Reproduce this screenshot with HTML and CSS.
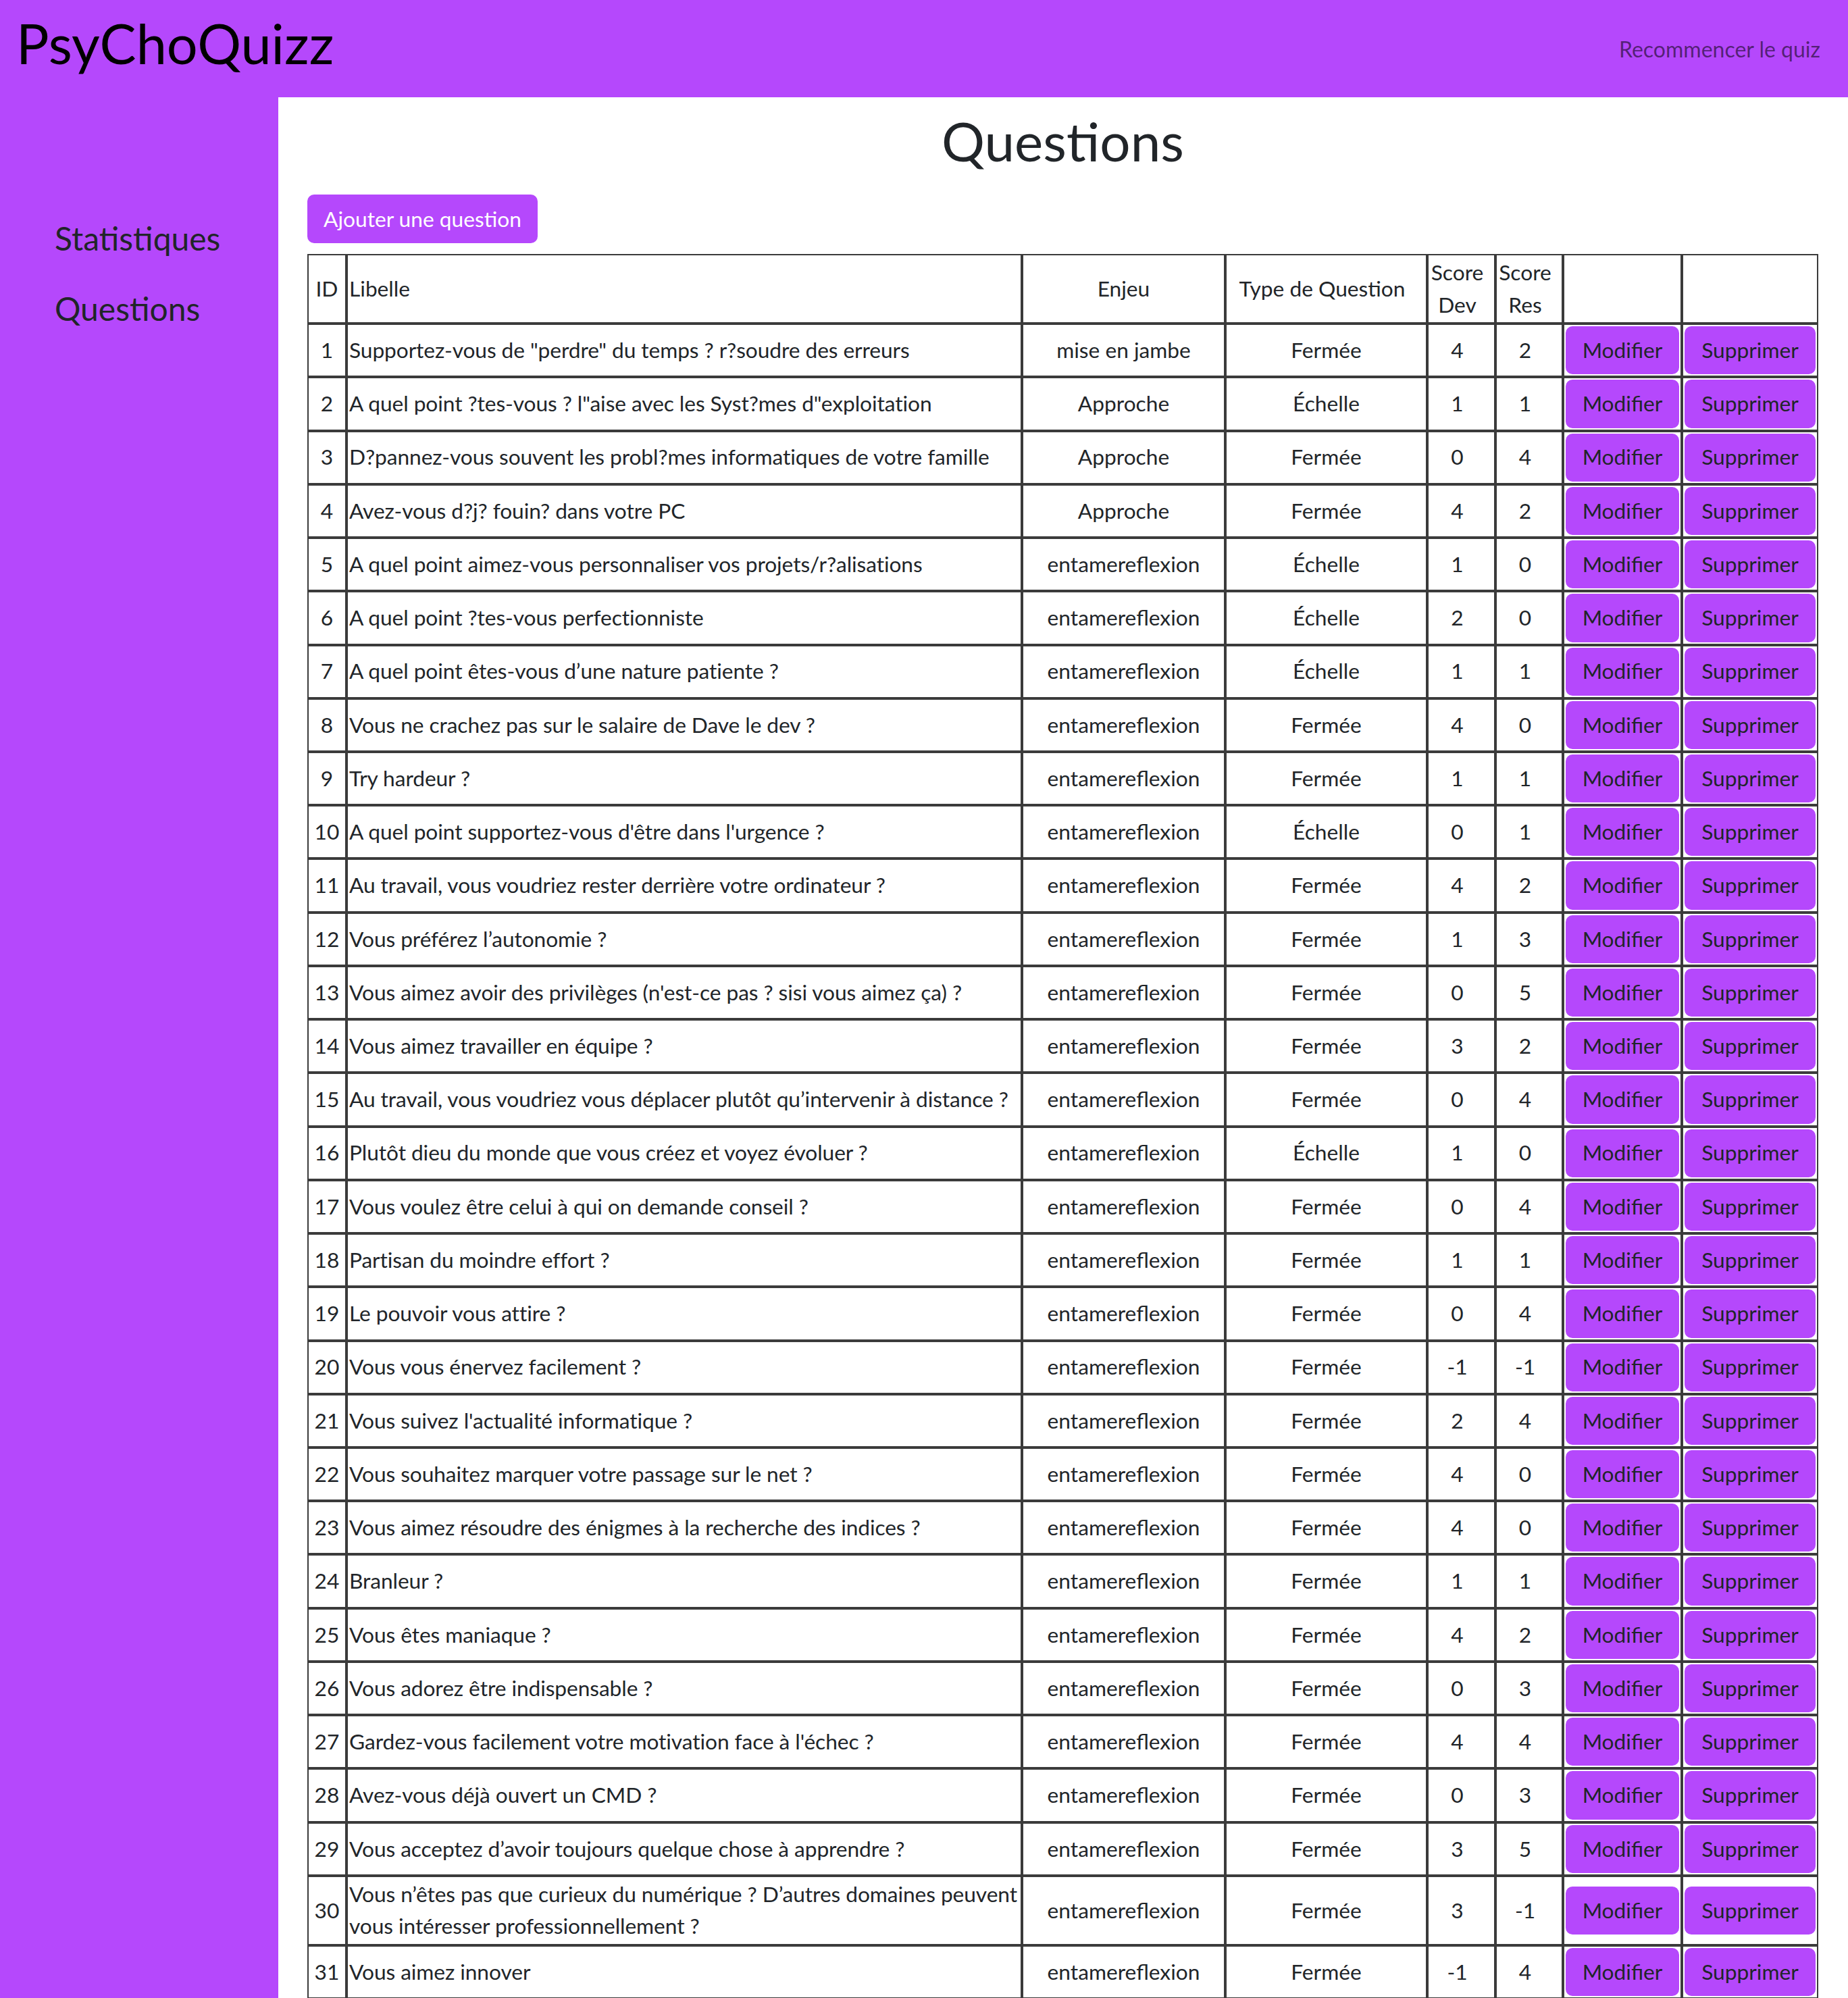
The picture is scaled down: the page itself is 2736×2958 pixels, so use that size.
FILE: index.html
```html
<!DOCTYPE html>
<html lang="fr">
<head>
<meta charset="utf-8">
<title>PsyChoQuizz</title>
<link rel="stylesheet" href="styles.css">
</head>
<body>
<header class="topbar">
  <div class="brand">PsyChoQuizz</div>
  <a class="restart" href="#">Recommencer le quiz</a>
</header>
<div class="layout">
  <nav class="sidebar">
    <a class="side-link" href="#">Statistiques</a>
    <a class="side-link" href="#">Questions</a>
  </nav>
  <main class="main">
    <h1 class="page-title">Questions</h1>
    <div class="toolbar"><button class="btn-add" type="button">Ajouter une question</button></div>
    <table class="qtable">
      <thead>
        <tr>
          <th class="c-id">ID</th>
          <th class="c-lib">Libelle</th>
          <th class="c-enj">Enjeu</th>
          <th class="c-type">Type de Question</th>
          <th class="c-dev score">Score Dev</th>
          <th class="c-res score">Score Res</th>
          <th class="c-mod"></th>
          <th class="c-sup"></th>
        </tr>
      </thead>
      <tbody>
        <tr><td>1</td><td class="lib">Supportez-vous de "perdre" du temps ? r?soudre des erreurs</td><td>mise en jambe</td><td>Fermée</td><td class="score">4</td><td class="score">2</td><td><button class="btn-row" type="button">Modifier</button></td><td><button class="btn-row" type="button">Supprimer</button></td></tr>
        <tr><td>2</td><td class="lib">A quel point ?tes-vous ? l"aise avec les Syst?mes d"exploitation</td><td>Approche</td><td>Échelle</td><td class="score">1</td><td class="score">1</td><td><button class="btn-row" type="button">Modifier</button></td><td><button class="btn-row" type="button">Supprimer</button></td></tr>
        <tr><td>3</td><td class="lib">D?pannez-vous souvent les probl?mes informatiques de votre famille</td><td>Approche</td><td>Fermée</td><td class="score">0</td><td class="score">4</td><td><button class="btn-row" type="button">Modifier</button></td><td><button class="btn-row" type="button">Supprimer</button></td></tr>
        <tr><td>4</td><td class="lib">Avez-vous d?j? fouin? dans votre PC</td><td>Approche</td><td>Fermée</td><td class="score">4</td><td class="score">2</td><td><button class="btn-row" type="button">Modifier</button></td><td><button class="btn-row" type="button">Supprimer</button></td></tr>
        <tr><td>5</td><td class="lib">A quel point aimez-vous personnaliser vos projets/r?alisations</td><td>entamereflexion</td><td>Échelle</td><td class="score">1</td><td class="score">0</td><td><button class="btn-row" type="button">Modifier</button></td><td><button class="btn-row" type="button">Supprimer</button></td></tr>
        <tr><td>6</td><td class="lib">A quel point ?tes-vous perfectionniste</td><td>entamereflexion</td><td>Échelle</td><td class="score">2</td><td class="score">0</td><td><button class="btn-row" type="button">Modifier</button></td><td><button class="btn-row" type="button">Supprimer</button></td></tr>
        <tr><td>7</td><td class="lib">A quel point êtes-vous d’une nature patiente ?</td><td>entamereflexion</td><td>Échelle</td><td class="score">1</td><td class="score">1</td><td><button class="btn-row" type="button">Modifier</button></td><td><button class="btn-row" type="button">Supprimer</button></td></tr>
        <tr><td>8</td><td class="lib">Vous ne crachez pas sur le salaire de Dave le dev ?</td><td>entamereflexion</td><td>Fermée</td><td class="score">4</td><td class="score">0</td><td><button class="btn-row" type="button">Modifier</button></td><td><button class="btn-row" type="button">Supprimer</button></td></tr>
        <tr><td>9</td><td class="lib">Try hardeur ?</td><td>entamereflexion</td><td>Fermée</td><td class="score">1</td><td class="score">1</td><td><button class="btn-row" type="button">Modifier</button></td><td><button class="btn-row" type="button">Supprimer</button></td></tr>
        <tr><td>10</td><td class="lib">A quel point supportez-vous d'être dans l'urgence ?</td><td>entamereflexion</td><td>Échelle</td><td class="score">0</td><td class="score">1</td><td><button class="btn-row" type="button">Modifier</button></td><td><button class="btn-row" type="button">Supprimer</button></td></tr>
        <tr><td>11</td><td class="lib">Au travail, vous voudriez rester derrière votre ordinateur ?</td><td>entamereflexion</td><td>Fermée</td><td class="score">4</td><td class="score">2</td><td><button class="btn-row" type="button">Modifier</button></td><td><button class="btn-row" type="button">Supprimer</button></td></tr>
        <tr><td>12</td><td class="lib">Vous préférez l’autonomie ?</td><td>entamereflexion</td><td>Fermée</td><td class="score">1</td><td class="score">3</td><td><button class="btn-row" type="button">Modifier</button></td><td><button class="btn-row" type="button">Supprimer</button></td></tr>
        <tr><td>13</td><td class="lib">Vous aimez avoir des privilèges (n'est-ce pas ? sisi vous aimez ça) ?</td><td>entamereflexion</td><td>Fermée</td><td class="score">0</td><td class="score">5</td><td><button class="btn-row" type="button">Modifier</button></td><td><button class="btn-row" type="button">Supprimer</button></td></tr>
        <tr><td>14</td><td class="lib">Vous aimez travailler en équipe ?</td><td>entamereflexion</td><td>Fermée</td><td class="score">3</td><td class="score">2</td><td><button class="btn-row" type="button">Modifier</button></td><td><button class="btn-row" type="button">Supprimer</button></td></tr>
        <tr><td>15</td><td class="lib">Au travail, vous voudriez vous déplacer plutôt qu’intervenir à distance ?</td><td>entamereflexion</td><td>Fermée</td><td class="score">0</td><td class="score">4</td><td><button class="btn-row" type="button">Modifier</button></td><td><button class="btn-row" type="button">Supprimer</button></td></tr>
        <tr><td>16</td><td class="lib">Plutôt dieu du monde que vous créez et voyez évoluer ?</td><td>entamereflexion</td><td>Échelle</td><td class="score">1</td><td class="score">0</td><td><button class="btn-row" type="button">Modifier</button></td><td><button class="btn-row" type="button">Supprimer</button></td></tr>
        <tr><td>17</td><td class="lib">Vous voulez être celui à qui on demande conseil ?</td><td>entamereflexion</td><td>Fermée</td><td class="score">0</td><td class="score">4</td><td><button class="btn-row" type="button">Modifier</button></td><td><button class="btn-row" type="button">Supprimer</button></td></tr>
        <tr><td>18</td><td class="lib">Partisan du moindre effort ?</td><td>entamereflexion</td><td>Fermée</td><td class="score">1</td><td class="score">1</td><td><button class="btn-row" type="button">Modifier</button></td><td><button class="btn-row" type="button">Supprimer</button></td></tr>
        <tr><td>19</td><td class="lib">Le pouvoir vous attire ?</td><td>entamereflexion</td><td>Fermée</td><td class="score">0</td><td class="score">4</td><td><button class="btn-row" type="button">Modifier</button></td><td><button class="btn-row" type="button">Supprimer</button></td></tr>
        <tr><td>20</td><td class="lib">Vous vous énervez facilement ?</td><td>entamereflexion</td><td>Fermée</td><td class="score">-1</td><td class="score">-1</td><td><button class="btn-row" type="button">Modifier</button></td><td><button class="btn-row" type="button">Supprimer</button></td></tr>
        <tr><td>21</td><td class="lib">Vous suivez l'actualité informatique ?</td><td>entamereflexion</td><td>Fermée</td><td class="score">2</td><td class="score">4</td><td><button class="btn-row" type="button">Modifier</button></td><td><button class="btn-row" type="button">Supprimer</button></td></tr>
        <tr><td>22</td><td class="lib">Vous souhaitez marquer votre passage sur le net ?</td><td>entamereflexion</td><td>Fermée</td><td class="score">4</td><td class="score">0</td><td><button class="btn-row" type="button">Modifier</button></td><td><button class="btn-row" type="button">Supprimer</button></td></tr>
        <tr><td>23</td><td class="lib">Vous aimez résoudre des énigmes à la recherche des indices ?</td><td>entamereflexion</td><td>Fermée</td><td class="score">4</td><td class="score">0</td><td><button class="btn-row" type="button">Modifier</button></td><td><button class="btn-row" type="button">Supprimer</button></td></tr>
        <tr><td>24</td><td class="lib">Branleur ?</td><td>entamereflexion</td><td>Fermée</td><td class="score">1</td><td class="score">1</td><td><button class="btn-row" type="button">Modifier</button></td><td><button class="btn-row" type="button">Supprimer</button></td></tr>
        <tr><td>25</td><td class="lib">Vous êtes maniaque ?</td><td>entamereflexion</td><td>Fermée</td><td class="score">4</td><td class="score">2</td><td><button class="btn-row" type="button">Modifier</button></td><td><button class="btn-row" type="button">Supprimer</button></td></tr>
        <tr><td>26</td><td class="lib">Vous adorez être indispensable ?</td><td>entamereflexion</td><td>Fermée</td><td class="score">0</td><td class="score">3</td><td><button class="btn-row" type="button">Modifier</button></td><td><button class="btn-row" type="button">Supprimer</button></td></tr>
        <tr><td>27</td><td class="lib">Gardez-vous facilement votre motivation face à l'échec ?</td><td>entamereflexion</td><td>Fermée</td><td class="score">4</td><td class="score">4</td><td><button class="btn-row" type="button">Modifier</button></td><td><button class="btn-row" type="button">Supprimer</button></td></tr>
        <tr><td>28</td><td class="lib">Avez-vous déjà ouvert un CMD ?</td><td>entamereflexion</td><td>Fermée</td><td class="score">0</td><td class="score">3</td><td><button class="btn-row" type="button">Modifier</button></td><td><button class="btn-row" type="button">Supprimer</button></td></tr>
        <tr><td>29</td><td class="lib">Vous acceptez d’avoir toujours quelque chose à apprendre ?</td><td>entamereflexion</td><td>Fermée</td><td class="score">3</td><td class="score">5</td><td><button class="btn-row" type="button">Modifier</button></td><td><button class="btn-row" type="button">Supprimer</button></td></tr>
        <tr><td>30</td><td class="lib">Vous n’êtes pas que curieux du numérique ? D’autres domaines peuvent vous intéresser professionnellement ?</td><td>entamereflexion</td><td>Fermée</td><td class="score">3</td><td class="score">-1</td><td><button class="btn-row" type="button">Modifier</button></td><td><button class="btn-row" type="button">Supprimer</button></td></tr>
        <tr><td>31</td><td class="lib">Vous aimez innover</td><td>entamereflexion</td><td>Fermée</td><td class="score">-1</td><td class="score">4</td><td><button class="btn-row" type="button">Modifier</button></td><td><button class="btn-row" type="button">Supprimer</button></td></tr>
      </tbody>
    </table>
  </main>
</div>
</body>
</html>
```

FILE: styles.css
```css
* {
  box-sizing: border-box;
}

body {
  margin: 0;
  font-family: Lato, "Noto Sans", sans-serif;
  color: #212529;
  background: #ffffff;
}

.topbar {
  height: 144px;
  background: #b548fc;
  display: flex;
  justify-content: space-between;
  align-items: flex-start;
  padding: 15px 41px 0 24px;
}

.brand {
  font-size: 81px;
  line-height: 1.2;
  color: #000000;
}

.restart {
  margin-top: 34px;
  font-size: 32px;
  line-height: 48px;
  color: rgba(0, 0, 0, 0.55);
  text-decoration: none;
}

.layout {
  display: flex;
  align-items: stretch;
  min-height: calc(100vh - 144px);
}

.sidebar {
  flex: none;
  width: 412px;
  background: #b548fc;
  padding: 157px 0 0 65px;
  display: flex;
  flex-direction: column;
}

.side-link {
  display: block;
  padding: 16px;
  font-size: 48px;
  line-height: 72px;
  color: #212529;
  text-decoration: none;
}

.main {
  flex: 1;
  min-width: 0;
  padding: 0 44px 40px 43px;
  background: #ffffff;
}

.page-title {
  margin: 16px 0 32px;
  font-size: 80px;
  line-height: 1.2;
  font-weight: 400;
  text-align: center;
  color: #212529;
}

.toolbar {
  display: flex;
  margin-bottom: 16px;
}

.btn-add {
  background: #b548fc;
  color: #ffffff;
  border: 0;
  border-radius: 10px;
  padding: 12px 24px;
  font-family: inherit;
  font-size: 31.7px;
  line-height: 48px;
}

.qtable {
  width: 100%;
  table-layout: fixed;
  border-collapse: separate;
  border-spacing: 0;
  font-size: 31.7px;
  line-height: 1.5;
}

.qtable th,
.qtable td {
  border: 2px solid #3b3b3b;
  padding: 2px;
  text-align: center;
  vertical-align: middle;
  font-weight: 400;
  color: #212529;
}

.qtable th.c-lib,
.qtable td.lib {
  text-align: left;
}

.qtable td.lib {
  padding-right: 0;
  letter-spacing: -0.08px;
}

.qtable th.score,
.qtable td.score,
.qtable th.c-type {
  padding-right: 14px;
}

.c-id { width: 58px; }
.c-lib { width: 1000px; }
.c-enj { width: 301px; }
.c-type { width: 299px; }
.c-dev { width: 101px; }
.c-res { width: 100px; }
.c-mod { width: 176px; }
.c-sup { width: 202px; }

.btn-row {
  display: block;
  width: 100%;
  background: #b548fc;
  color: #212529;
  border: 0;
  border-radius: 10px;
  padding: 11.85px 0;
  font-family: inherit;
  font-size: 31.7px;
  line-height: 1.5;
}
```
